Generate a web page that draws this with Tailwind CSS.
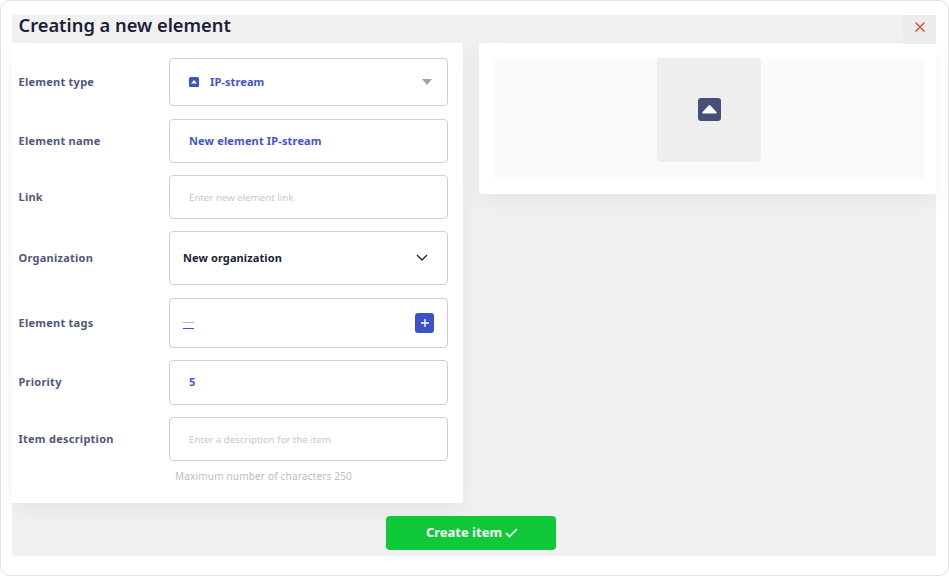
<!DOCTYPE html>
<html>
<head>
<meta charset="utf-8">
<script src="https://cdn.jsdelivr.net/npm/@tailwindcss/browser@4"></script>
</head>
<body class="bg-white font-['Noto_Sans','Open_Sans',sans-serif]">
<div class="w-[949px] h-[576px] overflow-hidden bg-white border border-[#e2e2e2] rounded-[10px] pt-[14px] pl-[11px]">
  <div class="w-[924px] h-[541px] bg-[#f1f1f1] flex flex-col relative">
    <div class="h-[28px] flex items-start shrink-0">
      <h1 class="pl-[6.5px] text-[18.3px] leading-[19px] font-semibold text-[#1a1f36]">Creating a new element</h1>
    </div>
    <button class="absolute right-0 top-0 w-[33px] h-[29px] bg-[#ececec] flex justify-center pt-[7px]">
      <svg width="10" height="10" viewBox="0 0 10 10" fill="none" stroke="#e0452c" stroke-width="1.3"><path d="M.5.5l9 9M9.500.5l-9 9"/></svg>
    </button>
    <div class="flex items-start gap-[16px]">
      <div class="w-[451px] h-[460px] shrink-0 bg-white rounded-r-[4px] shadow-[0_8px_24px_rgba(0,0,0,0.05)] pt-[15px] pl-[6px] flex flex-col">
        <div class="flex items-center h-[48px]">
          <span class="w-[151px] pl-[0.5px] text-[11px] font-bold tracking-[0.25px] text-[#50577c]">Element type</span>
          <div class="w-[279px] h-full border border-[#cfcfcf] rounded-[4px] flex items-center pl-[19px] pr-[15px]">
            <svg width="10" height="10" viewBox="0 0 10 10" class="mr-[11px]"><rect width="10" height="10" rx="1.5" fill="#3d52c9"/><path d="M2 6.500L5 3l3 3.500z" fill="#fff"/></svg>
            <span class="text-[11px] font-bold tracking-[0.1px] text-[#3f55c8]">IP-stream</span>
            <svg width="10" height="6" viewBox="0 0 10 6" class="ml-auto"><path d="M0 0h10L5 6z" fill="#a3a3a3"/></svg>
          </div>
        </div>
        <div class="flex items-center h-[44px] mt-[13px]">
          <span class="w-[151px] pl-[0.5px] text-[11px] font-bold tracking-[0.25px] text-[#50577c]">Element name</span>
          <div class="w-[279px] h-full border border-[#cfcfcf] rounded-[4px] flex items-center pl-[19px]">
            <span class="text-[11px] font-bold tracking-[0.15px] text-[#3f55c8]">New element IP-stream</span>
          </div>
        </div>
        <div class="flex items-center h-[44px] mt-[12px]">
          <span class="w-[151px] pl-[0.5px] text-[11px] font-bold tracking-[0.25px] text-[#50577c]">Link</span>
          <div class="w-[279px] h-full border border-[#cfcfcf] rounded-[4px] flex items-center pl-[19px] pt-[2px]">
            <span class="text-[9.7px] text-[#c8c8c8]">Enter new element link</span>
          </div>
        </div>
        <div class="flex items-center h-[54px] mt-[12px]">
          <span class="w-[151px] pl-[0.5px] text-[11px] font-bold tracking-[0.25px] text-[#50577c]">Organization</span>
          <div class="w-[279px] h-full border border-[#cfcfcf] rounded-[4px] flex items-center pl-[13px] pr-[19px]">
            <span class="text-[11px] font-bold tracking-[0.1px] text-[#1a1f36]">New organization</span>
            <svg width="12" height="7" viewBox="0 0 12 7" fill="none" stroke="#1a1f36" stroke-width="1.3" class="ml-auto mb-[2px]"><path d="M1 1l5 5 5-5"/></svg>
          </div>
        </div>
        <div class="flex items-center h-[50px] mt-[13px]">
          <span class="w-[151px] pl-[0.5px] text-[11px] font-bold tracking-[0.25px] text-[#50577c]">Element tags</span>
          <div class="w-[279px] h-full border border-[#cfcfcf] rounded-[4px] flex items-center pl-[13px] pr-[13px]">
            <div class="w-[11px] flex flex-col gap-[5px] mt-[4px]">
              <div class="h-px bg-[#a9b3e6]"></div>
              <div class="h-px bg-[#3f55c8]"></div>
            </div>
            <button class="ml-auto w-[19px] h-[20px] rounded-[3px] bg-[#3d52c9] flex items-center justify-center">
              <svg width="8" height="8" viewBox="0 0 8 8" stroke="#fff" stroke-width="1.4"><path d="M4 0v8M0 4h8"/></svg>
            </button>
          </div>
        </div>
        <div class="flex items-center h-[45px] mt-[12px]">
          <span class="w-[151px] pl-[0.5px] text-[11px] font-bold tracking-[0.25px] text-[#50577c]">Priority</span>
          <div class="w-[279px] h-full border border-[#cfcfcf] rounded-[4px] flex items-center pl-[19px]">
            <span class="text-[11px] font-bold text-[#3f55c8]">5</span>
          </div>
        </div>
        <div class="flex items-center h-[44px] mt-[12px]">
          <span class="w-[151px] pl-[0.5px] text-[11px] font-bold tracking-[0.25px] text-[#50577c]">Item description</span>
          <div class="w-[279px] h-full border border-[#cfcfcf] rounded-[4px] flex items-center pl-[19px] pt-[2px]">
            <span class="text-[9.7px] text-[#c8c8c8]">Enter a description for the item</span>
          </div>
        </div>
        <p class="ml-[157px] mt-[8px] text-[10px] leading-[14px] text-[#bdbdbd] tracking-[0.18px]">Maximum number of characters 250</p>
      </div>
      <div class="w-[457px] h-[151px] bg-white rounded-l-[4px] shadow-[0_8px_24px_rgba(0,0,0,0.05)] pt-[15px] pl-[15px]">
        <div class="w-[430px] h-[121px] bg-[#fafafa] rounded-[4px] pl-[163px]">
          <div class="w-[104px] h-[104px] bg-[#eeeeee] rounded-[4px] flex items-center justify-center pb-[2px]">
            <svg width="23" height="23" viewBox="0 0 23 23"><rect width="23" height="23" rx="3" fill="#454f78"/><path d="M5 15.500a.8.8 0 0 1-.6-1.300L10.800 7.300a1 1 0 0 1 1.400 0l6.400 6.900a.8.8 0 0 1-.6 1.300z" fill="#fff"/></svg>
          </div>
        </div>
      </div>
    </div>
    <div class="flex justify-center mt-[13px] pr-[6px]">
      <button class="w-[170px] h-[34px] bg-[#0fc938] rounded-[4px] flex items-center justify-center gap-[3px] text-white text-[13px] font-bold pl-[2px]">
        Create item
        <svg width="13" height="10" viewBox="0 0 13 10" fill="none" stroke="#fff" stroke-width="1.7"><path d="M1 5l3.500 3.500L12 1"/></svg>
      </button>
    </div>
  </div>
</div>
</body>
</html>
